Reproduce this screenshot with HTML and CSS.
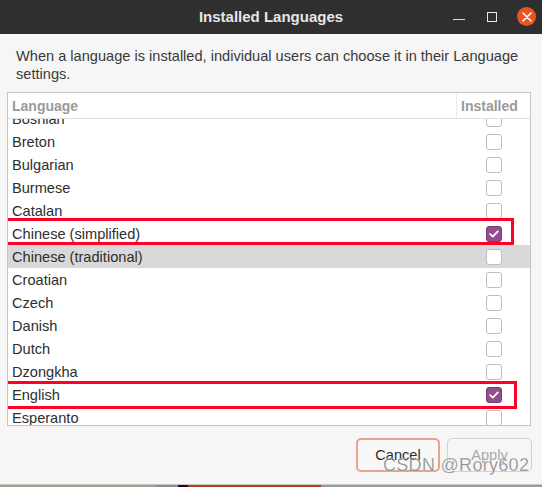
FILE: index.html
```html
<!DOCTYPE html>
<html>
<head>
<meta charset="utf-8">
<link rel="stylesheet" href="styles.css">
</head>
<body>
<div class="window">
  <header class="titlebar">
    <div class="title">Installed Languages</div>
    <div class="controls">
      <span class="ctl min"></span>
      <span class="ctl max"></span>
      <span class="ctl close">
        <svg width="10" height="10" viewBox="0 0 10 10"><path d="M1 1L9 9M9 1L1 9" stroke="#fff" stroke-width="1.6" stroke-linecap="round"/></svg>
      </span>
    </div>
  </header>
  <main class="content">
    <p class="desc">When a language is installed, individual users can choose it in their Language settings.</p>
    <div class="list">
      <div class="list-head">
        <div class="col-lang">Language</div>
        <div class="col-inst">Installed</div>
      </div>
      <div class="viewport">
        <div class="rows">
          <div class="row"><span class="name">Bosnian</span><span class="cell"><span class="cb"></span></span></div>
          <div class="row"><span class="name">Breton</span><span class="cell"><span class="cb"></span></span></div>
          <div class="row"><span class="name">Bulgarian</span><span class="cell"><span class="cb"></span></span></div>
          <div class="row"><span class="name">Burmese</span><span class="cell"><span class="cb"></span></span></div>
          <div class="row"><span class="name">Catalan</span><span class="cell"><span class="cb"></span></span></div>
          <div class="row marked mark-a"><span class="name">Chinese (simplified)</span><span class="cell"><span class="cb on"><svg width="10" height="8" viewBox="0 0 10 8"><path d="M1.2 4.2L3.8 6.6L8.8 1.4" fill="none" stroke="#fff" stroke-width="1.8" stroke-linecap="round" stroke-linejoin="round"/></svg></span></span></div>
          <div class="row selected"><span class="name">Chinese (traditional)</span><span class="cell"><span class="cb"></span></span></div>
          <div class="row"><span class="name">Croatian</span><span class="cell"><span class="cb"></span></span></div>
          <div class="row"><span class="name">Czech</span><span class="cell"><span class="cb"></span></span></div>
          <div class="row"><span class="name">Danish</span><span class="cell"><span class="cb"></span></span></div>
          <div class="row"><span class="name">Dutch</span><span class="cell"><span class="cb"></span></span></div>
          <div class="row"><span class="name">Dzongkha</span><span class="cell"><span class="cb"></span></span></div>
          <div class="row marked mark-b"><span class="name">English</span><span class="cell"><span class="cb on"><svg width="10" height="8" viewBox="0 0 10 8"><path d="M1.2 4.2L3.8 6.6L8.8 1.4" fill="none" stroke="#fff" stroke-width="1.8" stroke-linecap="round" stroke-linejoin="round"/></svg></span></span></div>
          <div class="row"><span class="name">Esperanto</span><span class="cell"><span class="cb"></span></span></div>
        </div>
      </div>
    </div>
    <div class="actions">
      <button class="btn cancel">Cancel</button>
      <button class="btn apply" disabled>Apply</button>
    </div>
    <div class="watermark">CSDN @Rory602</div>
  </main>
  <div class="desktop">
    <span class="d1"></span><span class="d2"></span><span class="d3"></span><span class="d4"></span><span class="d5"></span>
  </div>
</div>
</body>
</html>
```

FILE: styles.css
```css
html, body {
  margin: 0;
  padding: 0;
}
body {
  width: 542px;
  height: 487px;
  overflow: hidden;
  background: #f6f6f6;
  font-family: "Liberation Sans", "DejaVu Sans", sans-serif;
  color: #3c3c3c;
}
.window {
  display: flex;
  flex-direction: column;
  height: 487px;
}
.titlebar {
  height: 34px;
  flex: none;
  background: #2f2f2f;
  display: flex;
  align-items: center;
  justify-content: center;
  position: relative;
}
.title {
  color: #e6e6e6;
  font-weight: bold;
  font-size: 15px;
  margin-top: -1px;
}
.controls {
  position: absolute;
  right: 6px;
  top: 7px;
  display: flex;
  align-items: center;
  gap: 0;
}
.ctl {
  display: flex;
  align-items: center;
  justify-content: center;
}
.min {
  width: 12px;
  height: 1.5px;
  background: #e0e0e0;
  margin-top: 6px;
  margin-right: 22px;
}
.max {
  width: 8px;
  height: 8px;
  border: 1.2px solid #e8e8e8;
  margin-right: 20px;
}
.close {
  width: 19px;
  height: 19px;
  border-radius: 50%;
  background: #e95420;
}
.content {
  flex: 1;
  position: relative;
  padding: 0 10px 0 7px;
  display: flex;
  flex-direction: column;
}
.desc {
  margin: 13px 0 0 9px;
  font-size: 14.6px;
  line-height: 18px;
  color: #3a3a3a;
}
.list {
  margin-top: 9px;
  width: 522px;
  border: 1px solid #c4c4c4;
  background: #fff;
}
.list-head {
  height: 25px;
  display: flex;
  border-bottom: 1px solid #e2e2e2;
  font-weight: bold;
  font-size: 14px;
  color: #9a9a9a;
}
.col-lang {
  flex: 1;
  padding: 5px 0 0 4px;
}
.col-inst {
  width: 74px;
  border-left: 1px solid #ececec;
  padding: 5px 0 0 4px;
  box-sizing: border-box;
}
.viewport {
  height: 306px;
  overflow: hidden;
}
.rows {
  margin-top: -12px;
}
.row {
  height: 23px;
  display: flex;
  align-items: center;
  font-size: 14.6px;
  color: #2e2e2e;
  position: relative;
}
.row.selected {
  background: #d9d9d9;
}
.name {
  flex: 1;
  padding-left: 4px;
}
.cell {
  width: 75px;
  display: flex;
  justify-content: center;
}
.cb {
  width: 14px;
  height: 14px;
  border: 1px solid #bdbdbd;
  border-radius: 3px;
  background: #fff;
  display: flex;
  align-items: center;
  justify-content: center;
  margin-left: 2px;
}
.cb.on {
  background: #924d8b;
  border-color: #7c3b76;
}
.row.marked::after {
  content: "";
  position: absolute;
  border: 3px solid #ff0026;
  box-sizing: border-box;
  pointer-events: none;
}
.mark-a::after {
  left: -8px;
  top: -4px;
  width: 514px;
  height: 27px;
}
.mark-b::after {
  left: -6px;
  top: -2px;
  width: 515px;
  height: 28px;
}
.actions {
  display: flex;
  justify-content: flex-end;
  gap: 7px;
  margin-top: 12px;
}
.btn {
  height: 34px;
  border-radius: 5px;
  font-family: inherit;
  font-size: 14.6px;
  background: #f8f8f8;
  padding: 0;
}
.cancel {
  width: 84px;
  border: 2px solid #e9a38d;
  color: #2e2e2e;
}
.apply {
  width: 85px;
  border: 1px solid #d2d2d2;
  color: #a9a9a9;
  background: #f6f6f6;
}
.watermark {
  position: absolute;
  left: 383px;
  top: 421px;
  font-size: 18px;
  color: rgba(110, 110, 110, 0.75);
  letter-spacing: 0.3px;
  -webkit-text-stroke: 0.3px rgba(255,255,255,0.6);
}
.desktop {
  height: 2px;
  flex: none;
  display: flex;
  border-top: 1px solid #c8c8c8;
}
.desktop span { height: 2px; }
.d1 { width: 155px; background: #a59e8e; }
.d2 { width: 23px; background: #8f8f8f; }
.d3 { width: 10px; background: #2c001e; }
.d4 { width: 133px; background: #b4401e; }
.d5 { flex: 1; background: #9a9a9a; }
```
